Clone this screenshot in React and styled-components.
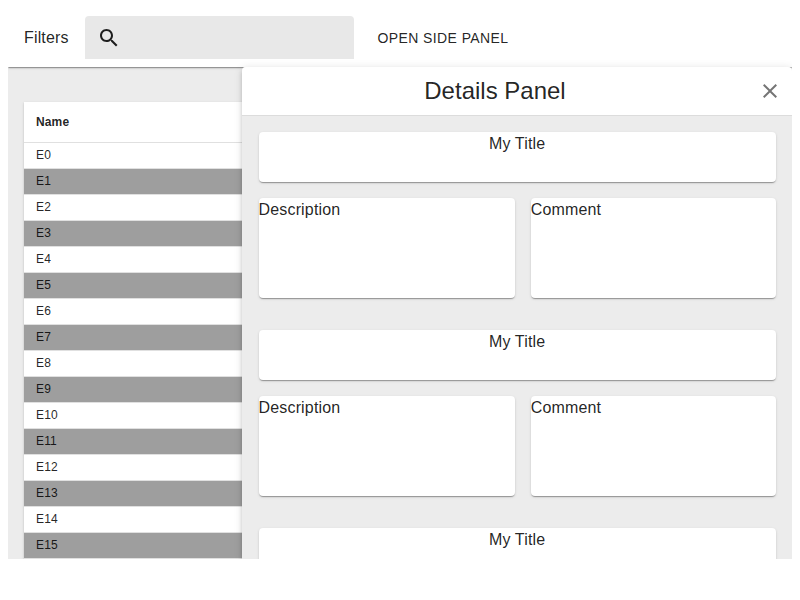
import React from "react";
import styled, { createGlobalStyle, css } from "styled-components";

const GlobalStyle = createGlobalStyle`
  *, *::before, *::after { box-sizing: border-box; }
  html, body { background: #fff; }
  body {
    margin: 8px;
    overflow: hidden;
    color: rgba(0, 0, 0, 0.87);
    font: 400 16px/24px "Liberation Sans", Arial, sans-serif;
    letter-spacing: 0.15px;
  }
`;

const raised = css`
  box-shadow: 0 2px 1px -1px rgba(0, 0, 0, 0.2), 0 1px 1px 0 rgba(0, 0, 0, 0.14),
    0 1px 3px 0 rgba(0, 0, 0, 0.12);
`;

const Page = styled.div`
  position: relative;
  display: flex;
  flex-direction: column;
  height: 551px;
  overflow: hidden;
`;

const Toolbar = styled.header`
  ${raised}
  position: relative;
  z-index: 1;
  display: flex;
  align-items: center;
  flex: none;
  height: 59px;
  padding: 0 16px;
  background: #fff;
`;

const FilterLabel = styled.span`
  width: 61px;
`;

const SearchField = styled.label`
  display: flex;
  align-items: center;
  width: 269px;
  height: 43px;
  padding: 0 12px;
  border-radius: 4px 4px 0 0;
  background: #e8e8e8;
`;

const SearchInput = styled.input`
  flex: 1;
  min-width: 0;
  margin-left: 8px;
  border: 0;
  outline: 0;
  background: transparent;
  font: inherit;
`;

const TextButton = styled.button`
  margin-left: 15.5px;
  padding: 7px 8px 5px;
  border: 0;
  background: transparent;
  color: inherit;
  font: 14px/24.5px "Liberation Sans", Arial, sans-serif;
  letter-spacing: 0.4px;
  text-transform: uppercase;
`;

const Content = styled.main`
  flex: 1;
  min-height: 0;
  padding: 35px 16px 0;
  background: #ececec;
`;

const Table = styled.table`
  ${raised}
  width: 100%;
  border-collapse: separate;
  border-spacing: 0;
  background: #fff;
  font-size: 12px;
  letter-spacing: 0.1286px;
`;

const HeadCell = styled.th`
  height: 41px;
  padding: 0 12px;
  border-bottom: 1px solid #e0e0e0;
  text-align: left;
`;

const Cell = styled.td`
  height: 26px;
  padding: 0 12px;
  border-bottom: 1px solid #e0e0e0;
  background: ${(p) => (p.$shaded ? "#9e9e9e" : "#fff")};
  line-height: 17px;
`;

const SidePanel = styled.aside`
  position: absolute;
  z-index: 3;
  top: 59px;
  right: 0;
  width: 550px;
  height: 492px;
  border-radius: 4px 4px 0 0;
  background: #ececec;
  box-shadow: 0 3px 3px -2px rgba(0, 0, 0, 0.2), 0 3px 4px 0 rgba(0, 0, 0, 0.14),
    0 1px 8px 0 rgba(0, 0, 0, 0.12);
`;

const PanelHeader = styled.div`
  display: flex;
  align-items: center;
  height: 49px;
  border-bottom: 1px solid #dcdcdc;
  border-radius: 4px 4px 0 0;
  background: #fff;
`;

const PanelTitle = styled.h2`
  flex: 1;
  margin: 0;
  font-size: 24px;
  font-weight: 400;
  line-height: 32px;
  letter-spacing: 0;
  text-align: center;
`;

const CloseButton = styled.button`
  display: flex;
  width: 44px;
  padding: 10px;
  border: 0;
  background: transparent;
  color: rgba(0, 0, 0, 0.54);
`;

const PanelBody = styled.div`
  display: grid;
  gap: 32px;
  height: 443px;
  overflow: hidden;
  align-content: start;
  padding: 16px 16.4px 0 16.6px;
`;

const Entry = styled.article`
  display: grid;
  grid-template-columns: 256.2px 1fr;
  gap: 16px;
`;

const Card = styled.div`
  ${raised}
  height: 100px;
  border-radius: 4px;
  background: #fff;
`;

const TitleCard = styled(Card)`
  grid-column: 1 / -1;
  height: 50px;
  text-align: center;
`;

const Icon = styled.svg`
  display: block;
  flex: none;
  width: 24px;
  height: 24px;
  fill: currentColor;
`;

const rows = Array.from({ length: 16 }, (_, i) => `E${i}`);
const entries = [
  { id: 1, title: "My Title", fields: ["Description", "Comment"] },
  { id: 2, title: "My Title", fields: ["Description", "Comment"] },
  { id: 3, title: "My Title", fields: [] },
];

export default function App() {
  return (
    <>
      <GlobalStyle />
      <Page>
        <Toolbar>
          <FilterLabel>Filters</FilterLabel>
          <SearchField>
            <Icon viewBox="0 0 24 24">
              <path d="M15.5 14h-.79l-.28-.27C15.41 12.59 16 11.11 16 9.5 16 5.91 13.09 3 9.5 3S3 5.91 3 9.5 5.91 16 9.5 16c1.61 0 3.09-.59 4.23-1.57l.27.28v.79l5 4.99L20.49 19l-4.99-5zm-6 0C7.01 14 5 11.99 5 9.5S7.01 5 9.5 5 14 7.01 14 9.5 11.99 14 9.5 14z" />
            </Icon>
            <SearchInput aria-label="Search" />
          </SearchField>
          <TextButton>Open side panel</TextButton>
        </Toolbar>
        <Content>
          <Table>
            <thead>
              <tr>
                <HeadCell>Name</HeadCell>
              </tr>
            </thead>
            <tbody>
              {rows.map((name, i) => (
                <tr key={name}>
                  <Cell $shaded={i % 2 === 1}>{name}</Cell>
                </tr>
              ))}
            </tbody>
          </Table>
        </Content>
        <SidePanel>
          <PanelHeader>
            <PanelTitle>Details Panel</PanelTitle>
            <CloseButton aria-label="Close">
              <Icon viewBox="0 0 24 24">
                <path d="M19 6.41L17.59 5 12 10.59 6.41 5 5 6.41 10.59 12 5 17.59 6.41 19 12 13.41 17.59 19 19 17.59 13.41 12z" />
              </Icon>
            </CloseButton>
          </PanelHeader>
          <PanelBody>
            {entries.map(({ id, title, fields }) => (
              <Entry key={id}>
                <TitleCard>{title}</TitleCard>
                {fields.map((field) => (
                  <Card key={field}>{field}</Card>
                ))}
              </Entry>
            ))}
          </PanelBody>
        </SidePanel>
      </Page>
    </>
  );
}
